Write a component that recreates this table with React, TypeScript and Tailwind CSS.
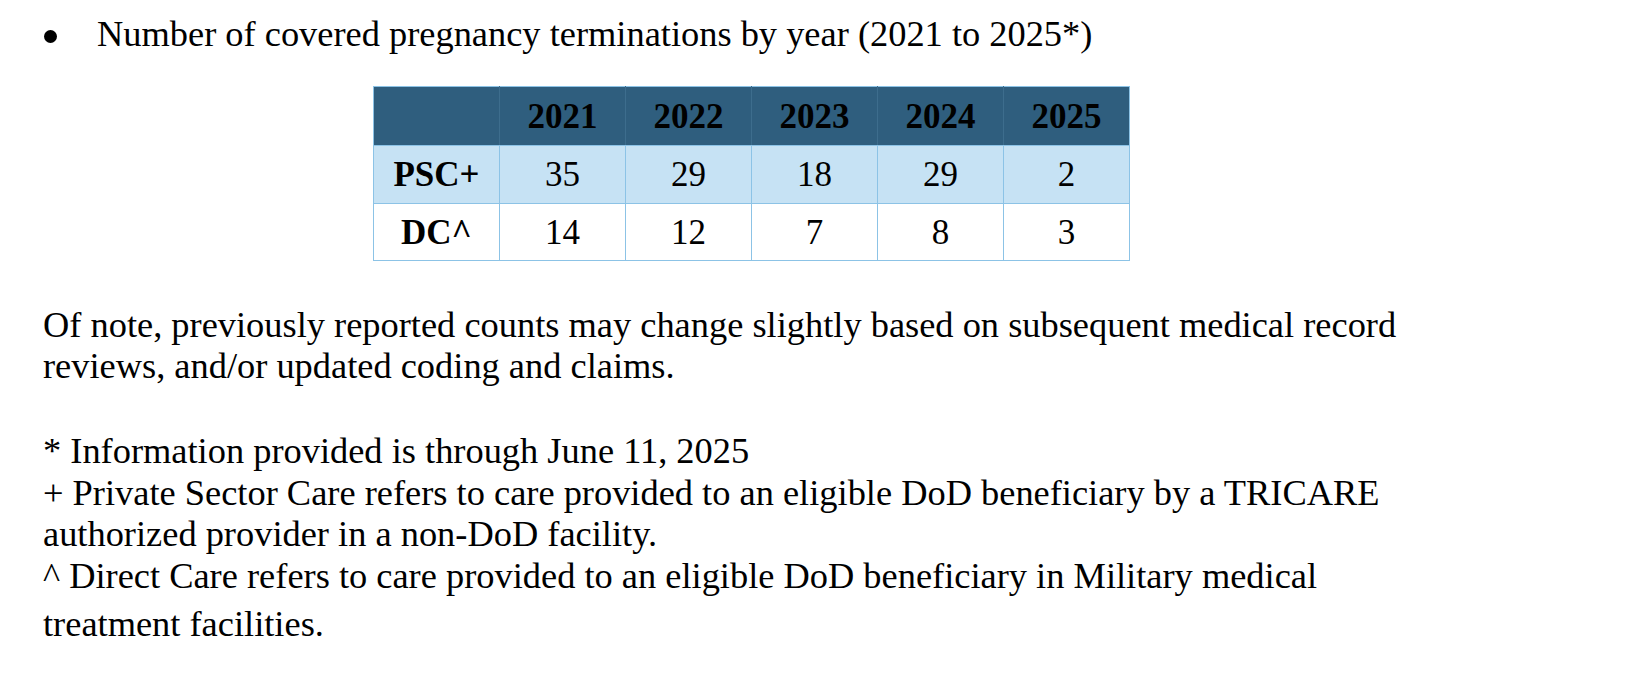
import React from "react";

const years = ["2021", "2022", "2023", "2024", "2025"];

const rows = [
  { label: "PSC+", values: ["35", "29", "18", "29", "2"], shaded: true },
  { label: "DC^", values: ["14", "12", "7", "8", "3"], shaded: false },
];

export default function App() {
  return (
    <div
      className="min-h-screen bg-white pl-[43px] pt-[14px] text-[36.4px] leading-[41px] text-black"
      style={{ fontFamily: '"Liberation Serif", "Times New Roman", serif' }}
    >
      {/* bullet line */}
      <div className="flex items-start">
        <div className="mt-[16px] ml-[1px] h-[13px] w-[13px] shrink-0 rounded-full bg-black" />
        <div className="ml-[40px]">
          Number of covered pregnancy terminations by year (2021 to 2025*)
        </div>
      </div>

      {/* table */}
      <table className="mt-[31px] ml-[330px] w-[756px] table-fixed border-collapse text-[35px]">
        <thead>
          <tr className="h-[59px] bg-[#2f5e7e]">
            <th className="w-[126px] border border-[#8cc3e6] border-r-[#3d6d8d]" />
            {years.map((y) => (
              <th
                key={y}
                className="w-[126px] border border-[#8cc3e6] border-l-[#3d6d8d] border-r-[#3d6d8d] text-center font-bold last:border-r-[#8cc3e6]"
              >
                {y}
              </th>
            ))}
          </tr>
        </thead>
        <tbody>
          {rows.map((r) => (
            <tr
              key={r.label}
              className={r.shaded ? "h-[58px] bg-[#c6e2f4]" : "h-[57px] bg-white"}
            >
              <td className="border border-[#8cc3e6] text-center font-bold">
                {r.label}
              </td>
              {r.values.map((v, i) => (
                <td key={i} className="border border-[#8cc3e6] text-center">
                  {v}
                </td>
              ))}
            </tr>
          ))}
        </tbody>
      </table>

      {/* note */}
      <p className="mt-[44px] max-w-[1400px]">
        Of note, previously reported counts may change slightly based on
        subsequent medical record reviews, and/or updated coding and claims.
      </p>

      {/* footnotes */}
      <div className="mt-[44px] max-w-[1400px] leading-[41.5px]">
        <div>* Information provided is through June 11, 2025</div>
        <div>
          + Private Sector Care refers to care provided to an eligible DoD
          beneficiary by a TRICARE authorized provider in a non-DoD facility.
        </div>
        <div>
          ^ Direct Care refers to care provided to an eligible DoD beneficiary
          in Military medical
        </div>
        <div className="mt-[7px]">treatment facilities.</div>
      </div>
    </div>
  );
}
